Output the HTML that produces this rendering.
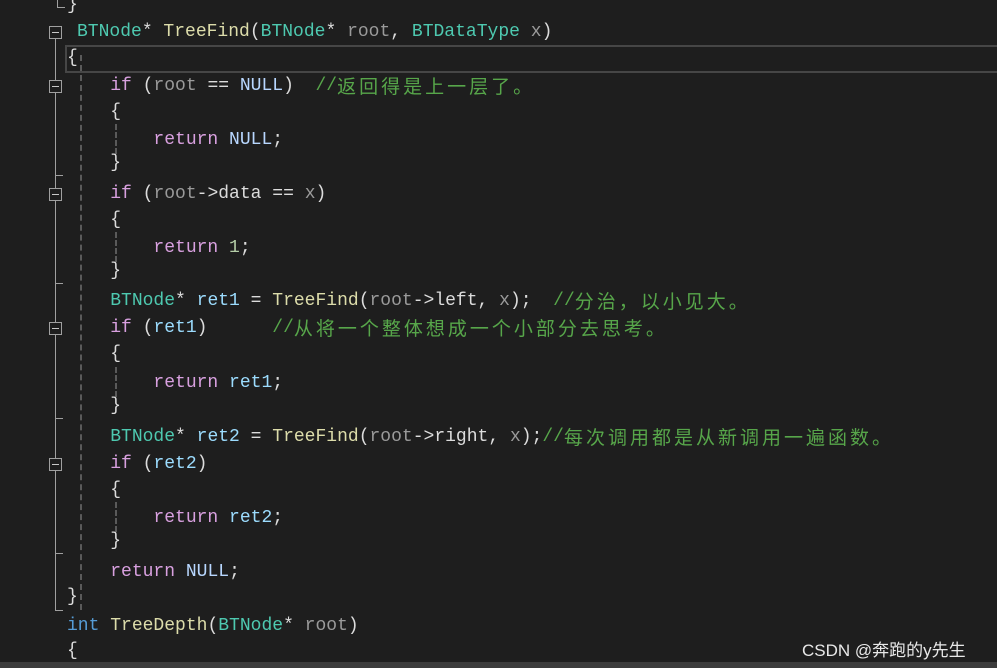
<!DOCTYPE html>
<html><head><meta charset="utf-8"><style>
body{margin:0;width:997px;height:668px;background:#1e1e1e;overflow:hidden;position:relative;font-family:"Liberation Mono","Noto Sans CJK SC",monospace;font-size:18px}
.l{position:absolute;left:67px;height:27px;line-height:27px;white-space:pre;color:#dcdcdc}
.k{color:#d8a0df}.t{color:#4ec9b0}.f{color:#dcdcaa}.p{color:#9a9a9a}.n{color:#b8d7ff}.c{color:#57a64a}.b{color:#569cd6}
.z{font-family:"Noto Sans CJK SC",sans-serif;font-size:19px;letter-spacing:3px;line-height:0;vertical-align:top;display:inline-block;height:27px;line-height:25px}
.fb{position:absolute;left:49px;width:11px;height:11px;border:1px solid #a0a0a0;background:#1e1e1e}
.fb:after{content:"";position:absolute;left:2px;top:5px;width:7px;height:1px;background:#c8c8c8}
.v{position:absolute;background:#a0a0a0;width:1px}
.h{position:absolute;background:#a0a0a0;height:1px;width:8px}
.d{position:absolute;border-left:2px dashed #5a5a5a;width:0}
</style></head><body>
<div style="position:absolute;left:65px;top:45px;width:940px;height:24px;border:2px solid #464646"></div>
<div class="v" style="left:57px;top:0;height:7px"></div><div class="h" style="left:57px;top:7px"></div>
<div class="v" style="left:55px;top:38px;height:573px"></div>
<div class="h" style="left:55px;top:610px"></div>
<div class="d" style="left:80px;top:55px;height:555px"></div>
<div class="d" style="left:115px;top:124px;height:30px"></div>
<div class="d" style="left:115px;top:232px;height:30px"></div>
<div class="d" style="left:115px;top:367px;height:30px"></div>
<div class="d" style="left:115px;top:502px;height:30px"></div>
<div class="h" style="left:55px;top:175px"></div><div class="h" style="left:55px;top:283px"></div><div class="h" style="left:55px;top:418px"></div><div class="h" style="left:55px;top:553px"></div>
<div class="fb" style="top:26px"></div><div class="fb" style="top:80px"></div><div class="fb" style="top:188px"></div><div class="fb" style="top:322px"></div><div class="fb" style="top:458px"></div>
<div class="l" style="top:-8px">}</div>
<div class="l" style="top:19px;left:77px"><span class="t">BTNode</span>* <span class="f">TreeFind</span>(<span class="t">BTNode</span>* <span class="p">root</span>, <span class="t">BTDataType</span> <span class="p">x</span>)</div>
<div class="l" style="top:45px">{</div>
<div class="l" style="top:73px">    <span class="k">if</span> (<span class="p">root</span> == <span class="n">NULL</span>)  <span class="c">//<span class="z">返回得是上一层了。</span></span></div>
<div class="l" style="top:99px">    {</div>
<div class="l" style="top:127px">        <span class="k">return</span> <span class="n">NULL</span>;</div>
<div class="l" style="top:150px">    }</div>
<div class="l" style="top:181px">    <span class="k">if</span> (<span class="p">root</span>-&gt;data == <span class="p">x</span>)</div>
<div class="l" style="top:207px">    {</div>
<div class="l" style="top:235px">        <span class="k">return</span> <span style="color:#b5cea8">1</span>;</div>
<div class="l" style="top:258px">    }</div>
<div class="l" style="top:288px">    <span class="t">BTNode</span>* <span style="color:#9cdcfe">ret1</span> = <span class="f">TreeFind</span>(<span class="p">root</span>-&gt;left, <span class="p">x</span>);  <span class="c">//<span class="z">分治，以小见大。</span></span></div>
<div class="l" style="top:315px">    <span class="k">if</span> (<span style="color:#9cdcfe">ret1</span>)      <span class="c">//<span class="z">从将一个整体想成一个小部分去思考。</span></span></div>
<div class="l" style="top:341px">    {</div>
<div class="l" style="top:370px">        <span class="k">return</span> <span style="color:#9cdcfe">ret1</span>;</div>
<div class="l" style="top:393px">    }</div>
<div class="l" style="top:424px">    <span class="t">BTNode</span>* <span style="color:#9cdcfe">ret2</span> = <span class="f">TreeFind</span>(<span class="p">root</span>-&gt;right, <span class="p">x</span>);<span class="c">//<span class="z">每次调用都是从新调用一遍函数。</span></span></div>
<div class="l" style="top:451px">    <span class="k">if</span> (<span style="color:#9cdcfe">ret2</span>)</div>
<div class="l" style="top:477px">    {</div>
<div class="l" style="top:505px">        <span class="k">return</span> <span style="color:#9cdcfe">ret2</span>;</div>
<div class="l" style="top:528px">    }</div>
<div class="l" style="top:559px">    <span class="k">return</span> <span class="n">NULL</span>;</div>
<div class="l" style="top:584px">}</div>
<div class="l" style="top:613px"><span class="b">int</span> <span class="f">TreeDepth</span>(<span class="t">BTNode</span>* <span class="p">root</span>)</div>
<div class="l" style="top:638px">{</div>
<div style="position:absolute;left:0;top:662px;width:997px;height:6px;background:#3c3c3c"></div>
<div style="position:absolute;left:802px;top:636px;color:#e8e8e8;font-family:'Liberation Sans','Noto Sans CJK SC',sans-serif;font-size:17px">CSDN @奔跑的y先生</div>
</body></html>
